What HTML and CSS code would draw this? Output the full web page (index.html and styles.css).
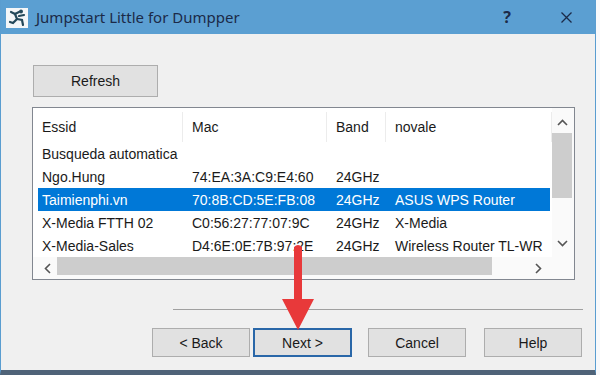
FILE: index.html
```html
<!DOCTYPE html>
<html lang="en">
<head>
    <meta charset="UTF-8">
    <meta name="viewport" content="width=device-width, initial-scale=1.0">
    <title>Jumpstart Little for Dumpper</title>
    <link rel="stylesheet" href="styles.css">
</head>
<body>
    <div class="window">
        <div class="titlebar">
            <svg class="app-icon" width="22" height="20" viewBox="0 0 22 20">
                <rect width="22" height="20" fill="#f4f6f8"/>
                <g stroke="#24485a" stroke-width="2.2" stroke-linecap="round" fill="none">
                    <path d="M5 4 L9 6 L13 4"/>
                    <path d="M9 6 L11 11 L7 15 L4 14"/>
                    <path d="M11 11 L16 12 L17 17"/>
                    <path d="M13 8 L18 7"/>
                </g>
                <circle cx="15" cy="3.5" r="2" fill="#24485a"/>
            </svg>
            <span class="title">Jumpstart Little for Dumpper</span>
            <span class="help">?</span>
            <svg class="close" width="11" height="11" viewBox="0 0 11 11">
                <path d="M0.5 0.5 L10.5 10.5 M10.5 0.5 L0.5 10.5" stroke="#1b2a48" stroke-width="1.3"/>
            </svg>
        </div>

        <div class="content">
            <button class="btn refresh">Refresh</button>

            <div class="listbox">
                <div class="list">
                    <div class="list-head">
                        <div>Essid</div>
                        <div>Mac</div>
                        <div>Band</div>
                        <div>novale</div>
                    </div>
                    <div class="list-body" id="netList"></div>
                </div>
                <div class="vscroll">
                    <svg width="11" height="7" viewBox="0 0 11 7"><path d="M1 6 L5.5 1.5 L10 6" stroke="#555" stroke-width="1.6" fill="none"/></svg>
                    <div class="vthumb"></div>
                    <svg class="down" width="11" height="7" viewBox="0 0 11 7"><path d="M1 1 L5.5 5.5 L10 1" stroke="#555" stroke-width="1.6" fill="none"/></svg>
                </div>
                <div class="hscroll">
                    <svg width="7" height="11" viewBox="0 0 7 11"><path d="M6 1 L1.5 5.5 L6 10" stroke="#555" stroke-width="1.6" fill="none"/></svg>
                    <div class="hthumb"></div>
                    <svg class="right" width="7" height="11" viewBox="0 0 7 11"><path d="M1 1 L5.5 5.5 L1 10" stroke="#555" stroke-width="1.6" fill="none"/></svg>
                </div>
                <div class="corner"></div>
            </div>

            <div class="separator"></div>

            <div class="actions">
                <button class="btn">&lt; Back</button>
                <button class="btn next">Next &gt;</button>
                <button class="btn cancel">Cancel</button>
                <button class="btn help-btn">Help</button>
            </div>
        </div>

        <svg class="arrow" width="34" height="88" viewBox="0 0 34 88">
            <path d="M13 3 Q17 -1 21 3 L21 55 L33 55 L17 86 L1 55 L13 55 Z" fill="#e8393a"/>
        </svg>
    </div>

    <script>
        const networks = [
            { essid: 'Busqueda automatica', mac: '', band: '', name: '' },
            { essid: 'Ngo.Hung', mac: '74:EA:3A:C9:E4:60', band: '24GHz', name: '' },
            { essid: 'Taimienphi.vn', mac: '70:8B:CD:5E:FB:08', band: '24GHz', name: 'ASUS WPS Router', selected: true },
            { essid: 'X-Media FTTH 02', mac: 'C0:56:27:77:07:9C', band: '24GHz', name: 'X-Media' },
            { essid: 'X-Media-Sales', mac: 'D4:6E:0E:7B:97:2E', band: '24GHz', name: 'Wireless Router TL-WR' }
        ];

        const netList = document.getElementById('netList');
        networks.forEach(net => {
            const row = document.createElement('div');
            row.className = net.selected ? 'row selected' : 'row';
            row.innerHTML = `
                <div>${net.essid}</div>
                <div>${net.mac}</div>
                <div>${net.band}</div>
                <div>${net.name}</div>
            `;
            netList.appendChild(row);
        });
    </script>
</body>
</html>
```

FILE: styles.css
```css
body {
    margin: 0;
    background: #f8f9fb;
    font-family: "Liberation Sans", Arial, sans-serif;
    font-size: 14px;
    color: #1a1a1a;
}
.window {
    position: relative;
    width: 594px;
    height: 370px;
    background: #f0f0f0;
    border-left: 1px solid #5a9dd0;
    border-right: 1px solid #5a9dd0;
    border-bottom: 5px solid #4f6378;
}
.titlebar {
    height: 34px;
    background: #5b9fd2;
    display: flex;
    align-items: center;
}
.app-icon {
    margin-left: 5px;
    margin-top: 2px;
}
.title {
    margin-left: 8px;
    font-family: "Noto Sans", sans-serif;
    font-size: 15px;
    color: #1b2a48;
}
.help {
    margin-left: auto;
    font-family: "Noto Sans", sans-serif;
    font-weight: bold;
    font-size: 16px;
    color: #1b2a48;
}
.close {
    margin-left: 50px;
    margin-right: 23px;
}

.content {
    padding-left: 31px;
}
.btn {
    height: 29px;
    width: 98px;
    padding: 0;
    background: #e1e1e1;
    border: 1px solid #adadad;
    font-family: "Liberation Sans", Arial, sans-serif;
    font-size: 14px;
    color: #1a1a1a;
}
.refresh {
    margin: 31px 0 0 1px;
    width: 125px;
    height: 32px;
}

.listbox {
    margin-top: 10px;
    width: 543px;
    height: 173px;
    box-sizing: border-box;
    border: 1px solid #828790;
    background: #fff;
    display: grid;
    grid-template-columns: 1fr 22px;
    grid-template-rows: 149px 1fr;
}
.list {
    overflow: hidden;
}
.list-head {
    height: 34px;
    box-sizing: border-box;
    padding-top: 4px;
    display: grid;
    grid-template-columns: 150px 144px 59px 1fr;
}
.list-head div {
    padding-left: 9px;
    display: flex;
    align-items: center;
    border-right: 1px solid #ececec;
}
.list-body {
    padding-left: 5px;
}
.row {
    width: 512px;
    height: 23px;
    display: grid;
    grid-template-columns: 145px 144px 59px 1fr;
    align-items: center;
    white-space: nowrap;
    padding-top: 1px;
    box-sizing: border-box;
}
.row div {
    padding-left: 9px;
}
.row div:first-child {
    padding-left: 4px;
}
.row.selected {
    background: #0078d7;
    color: #fff;
}

.vscroll {
    display: flex;
    flex-direction: column;
    align-items: center;
    padding: 11px 2px 0 0;
    background: #fafafa;
}
.vthumb {
    width: 20px;
    height: 65px;
    margin-top: 7px;
    background: #cdcdcd;
}
.vscroll .down {
    margin-top: 42px;
}
.hscroll {
    display: flex;
    align-items: flex-start;
    padding: 4px 0 0 11px;
    background: #fafafa;
}
.hscroll svg {
    margin-top: 2px;
}
.hthumb {
    width: 435px;
    height: 18px;
    margin: -4px 0 0 6px;
    background: #cdcdcd;
}
.hscroll .right {
    margin-left: 43px;
}
.corner {
    background: #fafafa;
}

.separator {
    margin: 29px 0 0 141px;
    width: 410px;
    height: 1px;
    background: #a0a0a0;
}
.actions {
    display: flex;
    margin: 18px 0 0 120px;
}
.next {
    margin-left: 3px;
    width: 99px;
    border: 2px solid #2a67a8;
}
.cancel {
    margin-left: 16px;
}
.help-btn {
    margin-left: 18px;
}

.arrow {
    position: absolute;
    left: 280px;
    top: 244px;
}
```
